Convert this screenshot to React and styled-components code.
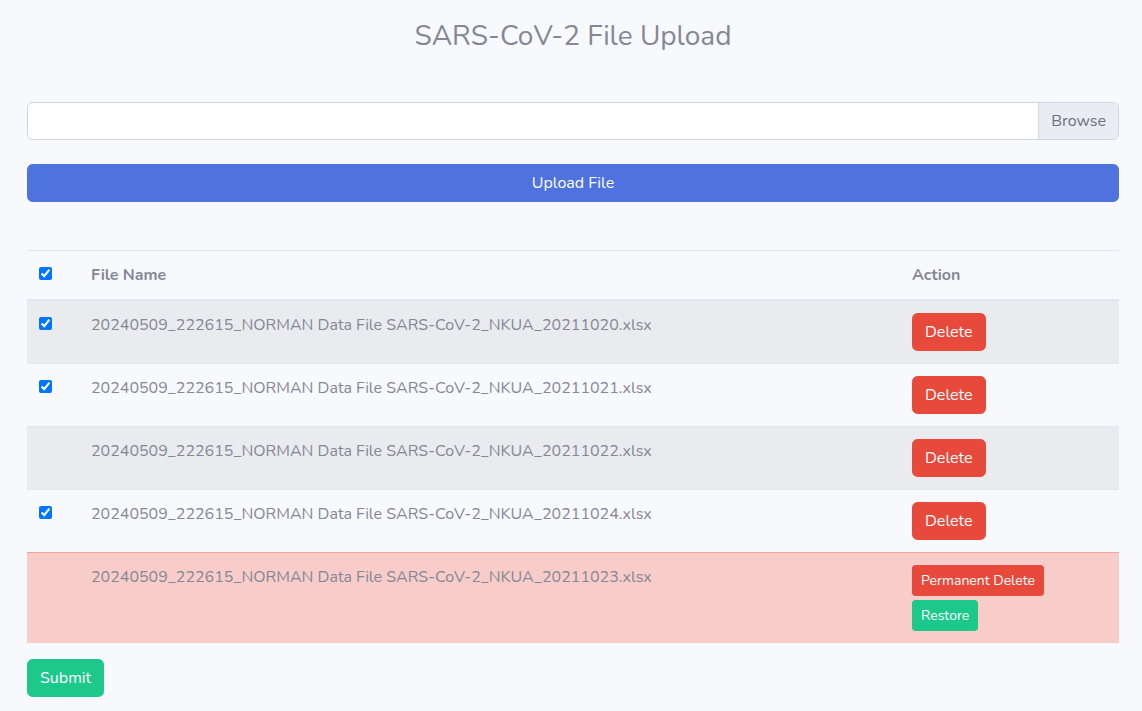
import React from 'react';
import styled, { createGlobalStyle } from 'styled-components';

const GlobalStyle = createGlobalStyle`
  body {
    margin: 0;
    background: #f8f9fc;
    font-family: "Nunito", Lato, "Noto Sans", sans-serif;
    font-size: 16px;
    color: #858796;
  }
  * { box-sizing: border-box; }
`;

const Page = styled.div`
  padding: 0 23px 14px 27px;
`;

const Title = styled.h3`
  margin: 19px 0 0;
  font-size: 28px;
  font-weight: 400;
  line-height: 34px;
  text-align: center;
  color: #858796;
`;

const FileRow = styled.div`
  display: flex;
  margin-top: 49px;
  height: 38px;
  border: 1px solid #d1d3e2;
  border-radius: 5.6px;
  background: #fff;
  overflow: hidden;
`;

const FileInput = styled.div`
  flex: 1;
`;

const Browse = styled.div`
  display: flex;
  align-items: center;
  padding: 0 12px;
  background: #eaecf4;
  border-left: 1px solid #d1d3e2;
  color: #6e707e;
`;

const Button = styled.button`
  display: ${p => (p.$block ? 'block' : 'inline-block')};
  width: ${p => (p.$block ? '100%' : 'auto')};
  height: ${p => (p.$small ? '31px' : '38px')};
  padding: ${p => (p.$small ? '0 8px' : '0 12px')};
  font-family: inherit;
  font-size: ${p => (p.$small ? '14px' : '16px')};
  color: #fff;
  background: ${p => p.$bg};
  border: 1px solid ${p => p.$bg};
  border-radius: ${p => (p.$small ? '3.2px' : '5.6px')};
  cursor: pointer;
`;

const UploadWrap = styled.div`
  margin-top: 24px;
`;

const Table = styled.table`
  width: 100%;
  margin-top: 48px;
  border-collapse: collapse;
  color: #858796;
`;

const Th = styled.th`
  padding: 12px;
  text-align: left;
  font-weight: 700;
  line-height: 24px;
  border-top: 1px solid #e3e6f0;
  border-bottom: 2px solid #e3e6f0;
  width: ${p => p.$w || 'auto'};
`;

const Tr = styled.tr`
  background: ${p => (p.$danger ? '#f8ccc8' : p.$striped ? '#eaebef' : 'transparent')};
`;

const Td = styled.td`
  padding: 12px;
  vertical-align: top;
  line-height: 24px;
  border-top: 1px solid ${p => (p.$danger ? '#f3a29b' : '#e3e6f0')};
`;

const Check = styled.input`
  margin: 4px 0 0;
  width: 13px;
  height: 13px;
  vertical-align: top;
`;

const Stack = styled.div`
  display: flex;
  flex-direction: column;
  align-items: flex-start;
  gap: 4px;
`;

const SubmitWrap = styled.div`
  margin-top: 16px;
`;

const files = [
  { name: '20240509_222615_NORMAN Data File SARS-CoV-2_NKUA_20211020.xlsx', checked: true },
  { name: '20240509_222615_NORMAN Data File SARS-CoV-2_NKUA_20211021.xlsx', checked: true },
  { name: '20240509_222615_NORMAN Data File SARS-CoV-2_NKUA_20211022.xlsx', checked: false, hidden: true },
  { name: '20240509_222615_NORMAN Data File SARS-CoV-2_NKUA_20211024.xlsx', checked: true },
];

export default function App() {
  return (
    <>
      <GlobalStyle />
      <Page>
        <Title>SARS-CoV-2 File Upload</Title>
        <FileRow>
          <FileInput />
          <Browse>Browse</Browse>
        </FileRow>
        <UploadWrap>
          <Button $block $bg="#4e73df">Upload File</Button>
        </UploadWrap>
        <Table>
          <thead>
            <tr>
              <Th $w="52px"><Check type="checkbox" checked readOnly /></Th>
              <Th>File Name</Th>
              <Th $w="219px">Action</Th>
            </tr>
          </thead>
          <tbody>
            {files.map((f, i) => (
              <Tr key={f.name} $striped={i % 2 === 0}>
                <Td>{!f.hidden && <Check type="checkbox" checked={f.checked} readOnly />}</Td>
                <Td>{f.name}</Td>
                <Td><Button $bg="#e74a3b">Delete</Button></Td>
              </Tr>
            ))}
            <Tr $danger>
              <Td $danger />
              <Td $danger>20240509_222615_NORMAN Data File SARS-CoV-2_NKUA_20211023.xlsx</Td>
              <Td $danger>
                <Stack>
                  <Button $small $bg="#e74a3b">Permanent Delete</Button>
                  <Button $small $bg="#1cc88a">Restore</Button>
                </Stack>
              </Td>
            </Tr>
          </tbody>
        </Table>
        <SubmitWrap>
          <Button $bg="#1cc88a">Submit</Button>
        </SubmitWrap>
      </Page>
    </>
  );
}
